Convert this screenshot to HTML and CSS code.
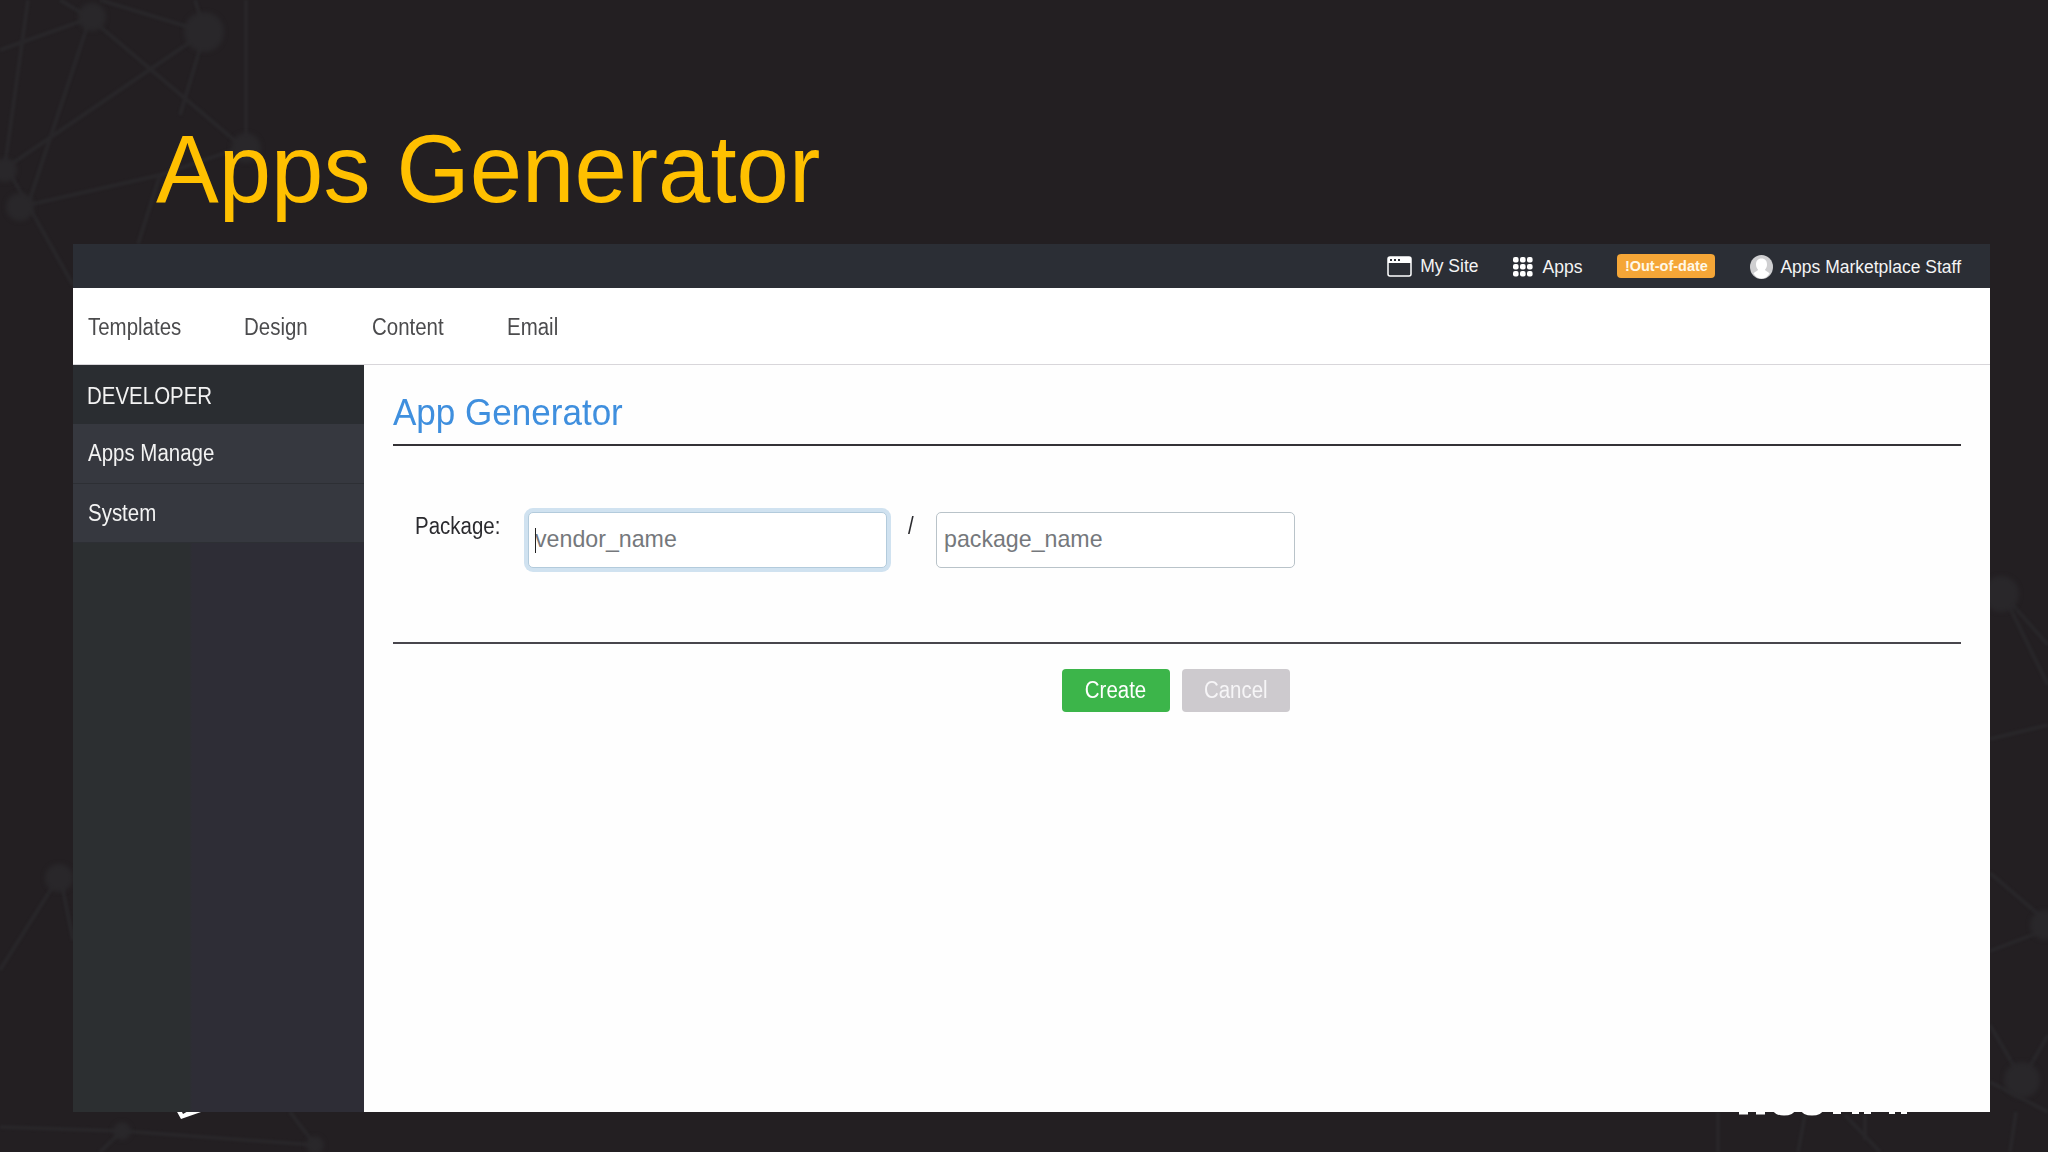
FILE: index.html
```html
<!DOCTYPE html>
<html>

<head>
    <meta charset="UTF-8">
    <title>Apps Generator</title>
    <link rel="stylesheet" href="styles.css">
</head>

<body>

    <svg class="network" width="2048" height="1152" viewBox="0 0 2048 1152">
        <g class="lines">
            <path d="M28 0L5 165M0 50L90 18L240 145M60 0L90 18L28 205M100 0L205 32L10 165M195 0L205 32L180 115M246 0V145M28 205L160 175L240 148M160 175L138 244M28 205L73 285M5 165L28 205" />
            <path d="M0 970L60 875L73 940M0 1127L122 1131L315 1145M122 1131L100 1152M290 1112L315 1145" />
            <path d="M2003 594L2048 645M2003 594L2048 685M1990 739L2048 725M1990 873L2045 920M1990 951L2045 930M1990 1025L2022 1080L2048 1035M1990 1082L2048 1112M2016 1112L2010 1152M1718 1112V1152M1805 1115L1798 1152M1845 1115L1880 1152M1865 1115V1140" />
        </g>
        <g class="dots">
            <circle cx="92" cy="17" r="14" />
            <circle cx="204" cy="32" r="20" />
            <circle cx="246" cy="148" r="15" />
            <circle cx="20" cy="207" r="14" />
            <circle cx="5" cy="170" r="12" />
            <circle cx="59" cy="878" r="14" />
            <circle cx="122" cy="1131" r="9" />
            <circle cx="315" cy="1145" r="9" />
            <circle cx="2001" cy="594" r="18" />
            <circle cx="2045" cy="925" r="15" />
            <circle cx="2022" cy="1080" r="18" />
        </g>
        <g class="logo">
            <path d="M176 1110L181 1119L201 1112V1108L190 1110L183 1114L181 1110Z" />
            <path d="M1739 1110h9v4.500h-9zM1756 1110h9v4.500h-9zM1833 1110h8v4h-8zM1852 1110h7v4h-7zM1864 1110h7v4h-7zM1889 1110h6v4h-6zM1901 1110h6v4h-6z" />
            <ellipse cx="1784" cy="1110" rx="11" ry="5.500" />
            <ellipse cx="1812" cy="1110" rx="11" ry="5.500" />
        </g>
    </svg>

    <h1 class="slide-title">Apps Generator</h1>

    <div class="window">
        <div class="topbar">
            <a class="top-item my-site">
                <svg width="25" height="21" viewBox="0 0 25 21">
                    <rect x="1" y="1" width="23" height="19" rx="2" fill="none" stroke="#fff" stroke-width="1.500" />
                    <path d="M1 1h23v6H1z" fill="#fff" />
                    <path d="M3 3h2v2H3zM7 3h2v2H7zM11 3h2v2h-2z" fill="#2b2e35" />
                </svg>
                <span>My Site</span>
            </a>
            <a class="top-item apps">
                <svg width="20" height="20" viewBox="0 0 20 20" fill="#fff">
                    <rect x="0" y="0" width="5.600" height="5.600" rx="2" />
                    <rect x="7" y="0" width="5.600" height="5.600" rx="2" />
                    <rect x="14" y="0" width="5.600" height="5.600" rx="2" />
                    <rect x="0" y="7" width="5.600" height="5.600" rx="2" />
                    <rect x="7" y="7" width="5.600" height="5.600" rx="2" />
                    <rect x="14" y="7" width="5.600" height="5.600" rx="2" />
                    <rect x="0" y="14" width="5.600" height="5.600" rx="2" />
                    <rect x="7" y="14" width="5.600" height="5.600" rx="2" />
                    <rect x="14" y="14" width="5.600" height="5.600" rx="2" />
                </svg>
                <span>Apps</span>
            </a>
            <span class="badge">!Out-of-date</span>
            <a class="top-item user">
                <svg width="23" height="24" viewBox="0 0 23 24">
                    <ellipse cx="11.500" cy="12" rx="11.500" ry="12" fill="#cfcfd1" />
                    <path d="M11.500 3.500c3.700 0 5.500 2.500 5.500 6 0 2.500-1 4-2 5 0 1.500 3 2 4.500 4-2 3-4.500 5-8 5s-6-2-8-5c1.500-2 4.500-2.500 4.500-4-1-1-2-2.500-2-5C6 6 7.800 3.500 11.500 3.500z" fill="#fff" />
                </svg>
                <span>Apps Marketplace Staff</span>
            </a>
        </div>

        <div class="menu">
            <a class="menu-templates"><span class="narrow">Templates</span></a>
            <a class="menu-design"><span class="narrow">Design</span></a>
            <a class="menu-content"><span class="narrow">Content</span></a>
            <a><span class="narrow">Email</span></a>
        </div>

        <div class="main">
            <div class="sidebar">
                <div class="side-title"><span class="narrow">DEVELOPER</span></div>
                <div class="side-item"><span class="narrow">Apps Manage</span></div>
                <div class="side-item"><span class="narrow">System</span></div>
            </div>

            <div class="content">
                <h2 class="content-title"><span>App Generator</span></h2>
                <div class="form-row">
                    <label class="label"><span class="narrow">Package:</span></label>
                    <div class="input focus"><i class="caret"></i>vendor_name</div>
                    <div class="slash"><span class="narrow">/</span></div>
                    <div class="input">package_name</div>
                </div>
                <div class="buttons">
                    <button class="btn btn-create"><span class="narrow">Create</span></button>
                    <button class="btn btn-cancel"><span class="narrow">Cancel</span></button>
                </div>
            </div>
        </div>
    </div>

</body>

</html>
```

FILE: styles.css
```css
* {
    box-sizing: border-box;
}

body {
    margin: 0;
    width: 2048px;
    height: 1152px;
    overflow: hidden;
    background-color: #231f22;
    font-family: "Liberation Sans", Arial, sans-serif;
}

/* background decoration */
.network {
    position: absolute;
    top: 0;
    left: 0;
    z-index: -1;
}

.lines {
    fill: none;
    stroke: #282629;
    stroke-width: 4;
    filter: blur(1px);
}

.dots {
    fill: #29272a;
    filter: blur(2px);
}

.logo {
    fill: #fff;
}

.slide-title {
    margin: 0;
    height: 244px;
    padding: 113px 0 0 156px;
    color: #ffc000;
    font-size: 97px;
    font-weight: normal;
    line-height: 112px;
    white-space: nowrap;
    transform: scaleX(0.97);
    transform-origin: 156px 0;
}

.window {
    width: 1917px;
    height: 868px;
    margin-left: 73px;
    background-color: #fefefe;
    display: flex;
    flex-direction: column;
}

.narrow {
    display: inline-block;
    transform: scaleX(0.89);
    transform-origin: 0 50%;
    white-space: nowrap;
}

.topbar {
    height: 44px;
    padding-right: 29px;
    background-color: #2b2e35;
    color: #f4f4f4;
    display: flex;
    align-items: center;
    justify-content: flex-end;
    font-size: 17.5px;
}

.top-item {
    display: flex;
    align-items: center;
}

.my-site {
    gap: 8px;
    margin-right: 34px;
}

.apps {
    gap: 10px;
    margin-right: 35px;
    padding-top: 2px;
}

.badge {
    width: 98px;
    height: 24px;
    margin-right: 35px;
    padding-top: 1px;
    border-radius: 4px;
    background-color: #f5a637;
    color: #fff8e8;
    font-size: 14.5px;
    font-weight: bold;
    line-height: 22px;
    text-align: center;
}

.user {
    gap: 7px;
    padding-top: 2px;
}

.menu {
    height: 77px;
    padding-left: 15px;
    border-bottom: 1px solid #d8d6da;
    background-color: #fff;
    color: #4b4b4d;
    display: flex;
    font-size: 23px;
    line-height: 78px;
}

.menu-templates {
    width: 156px;
}

.menu-design {
    width: 128px;
}

.menu-content {
    width: 135px;
}

.main {
    flex: 1;
    display: flex;
}

.sidebar {
    width: 291px;
    background: linear-gradient(to right, #2c2f31 40%, #2e2d36 41%);
    color: #f3f3f3;
    font-size: 23px;
}

.side-title {
    height: 59px;
    padding-left: 14px;
    background-color: #2a2d31;
    line-height: 62px;
}

.side-item {
    height: 59.5px;
    padding-left: 15px;
    border-bottom: 1px solid #2d2f34;
    background-color: #36383f;
    line-height: 59px;
}

.content {
    flex: 1;
    padding: 0 29px;
    color: #2a2a2e;
    font-size: 23px;
}

.content-title {
    height: 81px;
    margin: 0;
    border-bottom: 2px solid #343236;
    color: #3f8fde;
    font-size: 36.8px;
    font-weight: normal;
    line-height: 96px;
}

.content-title span {
    display: inline-block;
    transform: scaleX(0.952);
    transform-origin: 0 50%;
}

.form-row {
    height: 198px;
    padding: 66px 0 0 22px;
    border-bottom: 2px solid #48464c;
    display: flex;
    align-items: flex-start;
}

.label {
    width: 113px;
    line-height: 29px;
}

.input {
    width: 359px;
    height: 56px;
    padding-left: 7px;
    border: 1px solid #b9c3c9;
    border-radius: 5px;
    background-color: #fff;
    color: #75787c;
    font-size: 23.2px;
    line-height: 53px;
}

.focus {
    position: relative;
    padding-left: 6px;
    border-color: #b3cbdc;
    box-shadow: 0 0 0 4px #d0e2f0;
}

.caret {
    position: absolute;
    top: 15px;
    left: 6px;
    width: 1px;
    height: 25px;
    background-color: #222;
}

.slash {
    width: 49px;
    padding-left: 21px;
    line-height: 29px;
}

.buttons {
    padding: 25px 0 0 669px;
    display: flex;
    gap: 12px;
}

.btn {
    width: 108px;
    height: 43px;
    padding: 0 0 1px;
    border: 0;
    border-radius: 4px;
    color: #fff;
    font-family: inherit;
    font-size: 23px;
}

.btn .narrow {
    transform-origin: 50% 50%;
}

.btn-create {
    background-color: #3cb54a;
}

.btn-cancel {
    background-color: #cdcace;
    color: #f6f5f7;
}
```
